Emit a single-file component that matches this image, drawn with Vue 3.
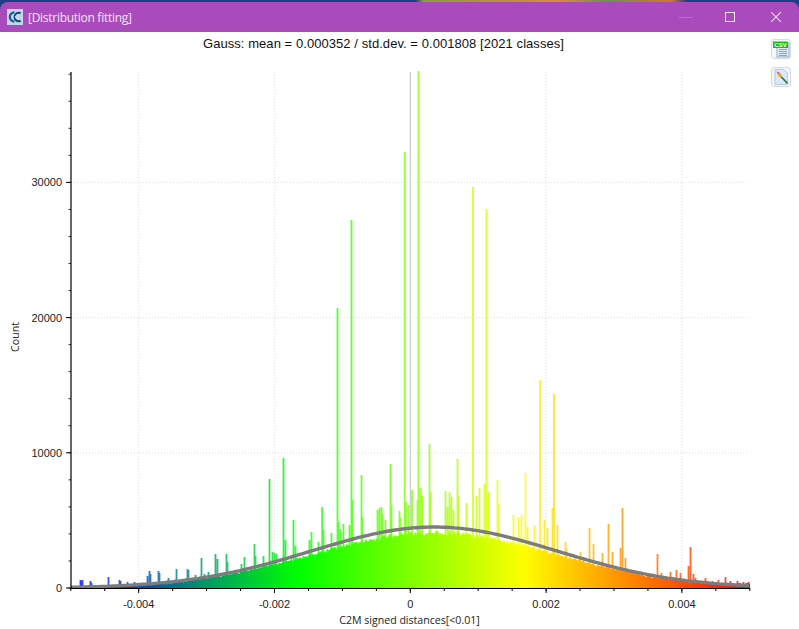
<script setup>
const x0 = 410.3
const pxPerUnit = 67900
const y0 = 588
const pxPerCount = 135.2 / 10000

const toX = (v) => x0 + v * pxPerUnit
const toY = (c) => y0 - c * pxPerCount

const gauss = (x) => {
    const z = (x - toX(0.000352)) / (0.001808 * pxPerUnit)
    return 61 * Math.exp(-0.5 * z * z)
}

// small seeded noise so the picture stays the same on every load
let seed = 17
const rnd = () => {
    seed = (seed * 16807) % 2147483647
    return seed / 2147483647
}

let body = 'M71 588'
for (let x = 71; x <= 750; x += 1) {
    const g = gauss(x)
    const h = g * (0.95 - rnd() * 0.08) - (rnd() < 0.15 ? 1.5 : 0)
    // the far ends keep a thin band of small classes
    const floor = x > 700 ? 3.5 + rnd() * 1.5 : x < 130 ? 0.8 + rnd() : 0.5
    body += ` L${x} ${(y0 - Math.max(h, floor)).toFixed(1)}`
}
body += ' L750 588 Z'

const curve = []
for (let x = 71; x <= 750; x += 3) {
    curve.push(`${x},${(y0 - gauss(x)).toFixed(1)}`)
}

// [x, top y] read from the reference
const spikes = [
    [80, 580], [81, 582], [82, 580], [90, 581], [91, 583], [108, 577], [119, 580], [120, 581], [127, 582], [134, 582],
    [147, 576], [149, 571], [150, 574], [158, 571], [159, 573], [168, 578], [176, 569], [187, 569], [188, 570], [195, 575],
    [201, 558], [204, 574], [208, 572], [215, 554], [217, 559], [226, 554], [227, 562],
    [241, 564], [244, 557], [254, 544], [255, 556], [263, 556], [269, 479], [272, 552],
    [274, 553], [276, 554], [283, 458], [285, 540], [293, 520], [295, 546], [309, 540],
    [311, 532], [318, 542], [321.7, 507], [323, 530], [331, 533], [337, 308], [338, 522],
    [340, 529], [343, 524], [349, 525], [351, 220], [352, 500], [361, 475], [362, 517],
    [377, 510], [379, 508], [381, 507], [382, 514], [385, 520], [390, 464], [391, 505],
    [399, 511], [400, 518], [404.2, 152], [405.5, 502], [408, 505], [411.5, 490], [417, 500],
    [418, 71], [420, 488], [422, 496], [429, 444], [430, 492], [445, 491], [447, 507],
    [449, 492], [451, 497], [453, 510], [457, 459], [458, 496], [466, 503], [472.5, 187],
    [476, 496], [479, 488], [484, 484], [486, 209], [488, 492], [497, 480], [498, 504],
    [513, 515], [518, 517], [521, 515], [525, 473], [527, 527], [534, 525], [539.5, 380],
    [544, 520], [547, 528], [552, 508], [553.5, 394], [557, 525], [565, 542], [566, 548],
    [580, 552], [589, 528], [593, 544], [602, 553], [608, 524], [612, 552], [620, 548],
    [622, 508], [625, 558], [657, 554], [661, 573], [670, 572], [676, 570], [680, 573],
    [688, 566], [690, 547], [693, 574], [695, 578], [705, 578], [712, 581], [718, 580],
    [725, 577], [730, 581], [737, 581], [743, 582], [748, 582],
]
const spikePath = spikes.map(([x, top]) => `M${x + 0.5} 588V${top}`).join('')

const xMajor = [
    { label: '-0.004', x: toX(-0.004) },
    { label: '-0.002', x: toX(-0.002) },
    { label: '0', x: toX(0) },
    { label: '0.002', x: toX(0.002) },
    { label: '0.004', x: toX(0.004) },
]
const yMajor = [
    { label: '0', y: toY(0) },
    { label: '10000', y: toY(10000) },
    { label: '20000', y: toY(20000) },
    { label: '30000', y: toY(30000) },
]
const xMinor = []
for (let i = -10; i <= 10; i++) xMinor.push(toX(i * 0.0005))
const yMinor = []
for (let c = 0; c <= 38000; c += 2000) yMinor.push(toY(c))
</script>

<template>
    <div class="win">
        <div class="desk"></div>
        <header class="bar">
            <svg class="logo" width="16" height="16" viewBox="0 0 16 16">
                <rect width="16" height="16" fill="#c3d5e8" />
                <path d="M7.4 3.4A4.5 4.5 0 1 0 7.4 12.6" fill="none" stroke="#1c5a96" stroke-width="2.2" />
                <path d="M13.6 4.2A4.2 4.2 0 1 0 13.6 11.8" fill="none" stroke="#14467f" stroke-width="2.2" />
                <path d="M12 6.2A2.2 2.2 0 1 0 12 9.8" fill="none" stroke="#dcebf7" stroke-width="1" />
            </svg>
            <span class="name">[Distribution fitting]</span>
            <div class="controls">
                <span class="min"></span>
                <span class="max"></span>
                <svg class="close" width="10" height="10" viewBox="0 0 10 10">
                    <path d="M0 0L10 10M10 0L0 10" stroke="#f6dcfb" stroke-width="1.1" />
                </svg>
            </div>
        </header>
        <main class="content">
            <section class="plot">
                <h1 class="head">Gauss: mean = 0.000352 / std.dev. = 0.001808 [2021 classes]</h1>
                <svg class="chart" width="767" height="575" viewBox="0 54 767 575">
                    <defs>
                        <linearGradient id="scale" gradientUnits="userSpaceOnUse" x1="71" y1="0" x2="750" y2="0">
                            <stop offset="0" stop-color="#0000ff" />
                            <stop offset="0.3333" stop-color="#00ff00" />
                            <stop offset="0.6667" stop-color="#ffff00" />
                            <stop offset="1" stop-color="#ff0000" />
                        </linearGradient>
                    </defs>
                    <g class="grid">
                        <path v-for="t in xMajor" :key="t.label" :d="`M${t.x} 72V588`" />
                        <path v-for="t in yMajor.slice(1)" :key="t.label" :d="`M71 ${t.y}H748`" />
                    </g>
                    <path d="M410.3 72V528" stroke="#c4c4c4" stroke-width="1" fill="none" />
                    <path :d="spikePath" stroke="url(#scale)" stroke-width="1.8" stroke-opacity="0.8" fill="none" />
                    <path :d="body" fill="url(#scale)" />
                    <polyline :points="curve.join(' ')" fill="none" stroke="#7c7c7c" stroke-width="3.4" />
                    <g class="axis">
                        <path d="M71 72V588.5M70.5 588.5H750" stroke-width="1.2" />
                        <path v-for="x in xMinor" :key="x" :d="`M${x} 588V591`" stroke-width="1" />
                        <path v-for="y in yMinor" :key="y" :d="`M68.5 ${y}H71`" stroke-width="0.8" />
                        <path v-for="t in xMajor" :key="t.label" :d="`M${t.x} 588V593`" stroke-width="1" />
                        <path v-for="t in yMajor" :key="t.label" :d="`M66 ${t.y}H71`" stroke-width="1" />
                    </g>
                    <text v-for="t in xMajor" :key="t.label" class="num" :x="t.x" y="608" text-anchor="middle">{{ t.label }}</text>
                    <text v-for="t in yMajor" :key="t.label" class="num" x="62" :y="t.y + 4" text-anchor="end">{{ t.label }}</text>
                    <text class="axis-name" x="409.5" y="624" text-anchor="middle">C2M signed distances[&lt;0.01]</text>
                    <text class="axis-name" transform="translate(19 337) rotate(-90)" text-anchor="middle">Count</text>
                </svg>
            </section>
            <aside class="tools">
                <button class="tool">
                    <svg width="18" height="18" viewBox="0 0 18 18">
                        <rect x="5" y="3" width="12" height="14" fill="#dfeaf6" stroke="#7f9fc4" stroke-width="0.8" />
                        <path d="M7 9.5H15M7 11.5H15M7 13.5H15M7 15.5H15" stroke="#6f93bd" stroke-width="0.8" />
                        <rect x="1" y="1.5" width="15" height="6.5" fill="#12c312" />
                        <text class="csv" x="8.5" y="7">CSV</text>
                    </svg>
                </button>
                <button class="tool">
                    <svg width="18" height="18" viewBox="0 0 18 18">
                        <path d="M3 1.5H12L15.5 5V16.5H3Z" fill="#dbe8f7" stroke="#a9c0dc" stroke-width="0.8" />
                        <path d="M8.5 8L15.5 15.5" stroke="#23803a" stroke-width="1.8" />
                        <path d="M4.5 3.5L9 5.5L10 9L6.5 8.5Z" fill="#eaa632" />
                        <path d="M5 3.5L7.5 4.5L6 6Z" fill="#c04f92" />
                    </svg>
                </button>
            </aside>
        </main>
    </div>
</template>

<style scoped>
.win {
    width: 799px;
    height: 629px;
    display: flex;
    flex-direction: column;
    overflow: hidden;
    background: linear-gradient(90deg, #1c3f86 0, #1c3f86 52%, #8c9b3f 53%, #d98a45 70%, #6f8f55 76%, #d3762f 84%, #1c3f86 86%, #1c3f86 100%);
}

.desk {
    height: 2px;
    flex: none;
}

.bar {
    height: 30px;
    flex: none;
    display: flex;
    align-items: center;
    padding-left: 7px;
    background: #a94bbc;
    color: #f5e6f8;
    border-radius: 8px 8px 0 0;
    font-family: "Open Sans", "Noto Sans", sans-serif;
    font-size: 12px;
    letter-spacing: -0.28px;
}

.logo {
    margin-right: 5px;
    flex: none;
}

.name {
    white-space: nowrap;
}

.controls {
    margin-left: auto;
    display: flex;
    align-items: center;
}

.min {
    width: 14px;
    height: 1px;
    margin-right: 32px;
    background: #b96ccb;
}

.max {
    width: 10px;
    height: 10px;
    margin-right: 36px;
    border: 1px solid #fbeefd;
    box-sizing: border-box;
}

.close {
    margin-right: 18px;
}

.content {
    flex: 1;
    display: flex;
    background: #fff;
}

.plot {
    width: 767px;
    flex: none;
}

.head {
    margin: 0;
    height: 22px;
    padding-top: 3px;
    box-sizing: border-box;
    text-align: center;
    font-family: "Liberation Sans", Arial, sans-serif;
    font-size: 13px;
    letter-spacing: 0.06px;
    line-height: 17px;
    font-weight: 400;
    color: #111;
    white-space: nowrap;
}

.chart {
    display: block;
}

.grid path {
    fill: none;
    stroke: #dcdcdc;
    stroke-width: 1;
    stroke-dasharray: 1 2;
}

.axis path {
    fill: none;
    stroke: #000;
}

.num {
    font-family: "Liberation Sans", Arial, sans-serif;
    font-size: 11px;
    fill: #222;
}

.axis-name {
    font-family: "Open Sans", "Noto Sans", sans-serif;
    font-size: 10.6px;
    fill: #222;
}

.csv {
    font-family: "Liberation Sans", Arial, sans-serif;
    font-size: 6px;
    font-weight: 700;
    fill: #fff;
    text-anchor: middle;
}

.tools {
    padding: 7px 0 0 4px;
    display: flex;
    flex-direction: column;
    gap: 8px;
}

.tool {
    width: 20px;
    height: 20px;
    padding: 0;
    display: flex;
    align-items: center;
    justify-content: center;
    border: 1px solid #d5dbe2;
    border-radius: 3px;
    background: #f4f6f8;
}
</style>

<style>
html,
body {
    overflow: hidden;
    background: #fff;
}
</style>
